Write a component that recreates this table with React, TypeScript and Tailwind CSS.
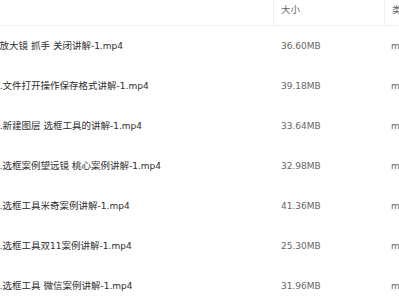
import React from "react";

const rows = [
  { pre: "1.", shift: "ml-[-9px]", name: "放大镜 抓手 关闭讲解-1.mp4", size: "36.60MB" },
  { pre: "2.", shift: "ml-[-6px]", name: "文件打开操作保存格式讲解-1.mp4", size: "39.18MB" },
  { pre: "3.", shift: "ml-[-6px]", name: "新建图层 选框工具的讲解-1.mp4", size: "33.64MB" },
  { pre: "4.", shift: "ml-[-6px]", name: "选框案例望远镜 桃心案例讲解-1.mp4", size: "32.98MB" },
  { pre: "5.", shift: "ml-[-6px]", name: "选框工具米奇案例讲解-1.mp4", size: "41.36MB" },
  { pre: "6.", shift: "ml-[-6px]", name: "选框工具双11案例讲解-1.mp4", size: "25.30MB" },
  { pre: "7.", shift: "ml-[-6px]", name: "选框工具 微信案例讲解-1.mp4", size: "31.96MB" },
];

function Name({ text }: { text: string }) {
  const parts = text.split(/([\u4e00-\u9fff]+)/);
  return (
    <>
      {parts.map((p, i) =>
        /[\u4e00-\u9fff]/.test(p) ? (
          <span key={i} className="text-[9.5px]">
            {p}
          </span>
        ) : (
          <span key={i}>{p}</span>
        )
      )}
    </>
  );
}

export default function App() {
  return (
    <div
      className="w-[399px] h-[300px] overflow-hidden bg-white text-[9px] leading-[12px]"
      style={{ fontFamily: '"DejaVu Sans", "Noto Sans CJK SC", sans-serif' }}
    >
      <div className="flex h-[26px] border-b border-[#f2f2f2]">
        <div className="w-[273px] shrink-0" />
        <div className="w-[111px] shrink-0 border-l border-[#f0f0f0] pl-[7px] pt-[4px] text-[#666]">
          <span className="text-[9.5px]">大小</span>
        </div>
        <div className="flex-1 border-l border-[#f0f0f0] pl-[7px] pt-[4px] text-[#666] whitespace-nowrap overflow-hidden">
          <span className="text-[9.5px]">类型</span>
        </div>
      </div>
      {rows.map((r) => (
        <div key={r.name} className="flex h-[40px] items-center">
          <div className="w-[273px] shrink-0 overflow-hidden whitespace-nowrap text-[#2e2e2e]">
            <span className={`inline-block ${r.shift}`}>
              {r.pre}
              <Name text={r.name} />
            </span>
          </div>
          <div className="w-[111px] shrink-0 pl-[8px] text-[#666]">{r.size}</div>
          <div className="flex-1 pl-[7px] text-[#666] whitespace-nowrap overflow-hidden">mp4</div>
        </div>
      ))}
    </div>
  );
}
